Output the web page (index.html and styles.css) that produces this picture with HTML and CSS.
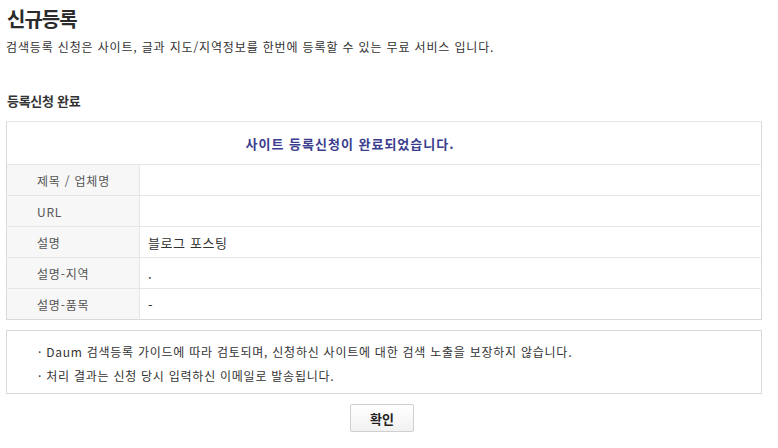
FILE: index.html
```html
<!DOCTYPE html>
<html lang="ko">
  <head>
    <meta charset="UTF-8" />
    <meta name="viewport" content="width=device-width, initial-scale=1.0" />
    <title>신규등록</title>
    <link rel="stylesheet" href="styles.css">
  </head>
  <body>
    <div class="wrap">
      <h1 class="title">신규등록</h1>
      <p class="desc">검색등록 신청은 사이트, 글과 지도/지역정보를 한번에 등록할 수 있는 무료 서비스 입니다.</p>

      <h2 class="sub">등록신청 완료</h2>
      <table class="result">
        <tr>
          <th colspan="2" class="done">사이트 등록신청이 완료되었습니다.</th>
        </tr>
        <tr>
          <td class="label">제목 / 업체명</td>
          <td class="value"></td>
        </tr>
        <tr>
          <td class="label">URL</td>
          <td class="value"></td>
        </tr>
        <tr>
          <td class="label">설명</td>
          <td class="value">블로그 포스팅</td>
        </tr>
        <tr>
          <td class="label">설명-지역</td>
          <td class="value">.</td>
        </tr>
        <tr>
          <td class="label">설명-품목</td>
          <td class="value">-</td>
        </tr>
      </table>

      <div class="notice">
        <p>· Daum 검색등록 가이드에 따라 검토되며, 신청하신 사이트에 대한 검색 노출을 보장하지 않습니다.</p>
        <p>· 처리 결과는 신청 당시 입력하신 이메일로 발송됩니다.</p>
      </div>

      <div class="actions">
        <button type="button" class="btn">확인</button>
      </div>
    </div>
  </body>
</html>
```

FILE: styles.css
```css
body {
  margin: 0;
  padding: 0;
  background-color: #fff;
  color: #333;
  font-family: "Noto Sans CJK KR", "Liberation Sans", sans-serif;
  font-size: 12px;
}
.wrap {
  width: 756px;
  margin-left: 6px;
}
.title {
  margin: 5px 0 0 1px;
  font-size: 20px;
  line-height: 28px;
  color: #2b2b2b;
  font-weight: bold;
  letter-spacing: -1px;
}
.desc {
  margin: 5px 0 0 0;
  line-height: 18px;
  color: #333;
  letter-spacing: 0.85px;
}
.sub {
  margin: 36px 0 0 1px;
  font-size: 13px;
  line-height: 18px;
  font-weight: bold;
  color: #333;
  letter-spacing: -0.3px;
}
.result {
  width: 100%;
  margin-top: 11px;
  border-collapse: collapse;
  border: 1px solid #d9d9d9;
}
.result td,
.result th {
  border-top: 1px solid #e6e6e6;
  padding: 0;
}
.result th.done {
  height: 42px;
  padding-right: 68px;
  text-align: center;
  font-size: 13px;
  font-weight: bold;
  color: #3b3e8e;
  letter-spacing: 1px;
}
.result td.label {
  width: 102px;
  height: 30px;
  padding-left: 30px;
  background-color: #f7f7f7;
  border-right: 1px solid #e6e6e6;
  color: #555;
  letter-spacing: 0.8px;
}
.result td.value {
  padding-left: 8px;
  font-size: 13px;
  color: #333;
  letter-spacing: 0.6px;
}
.notice {
  margin-top: 10px;
  border: 1px solid #d9d9d9;
  padding: 9px 0 5px 31px;
}
.notice p {
  margin: 0;
  line-height: 24px;
  color: #333;
  letter-spacing: 0.75px;
}
.actions {
  margin-top: 10px;
  text-align: center;
}
.btn {
  width: 64px;
  height: 28px;
  margin-left: -4px;
  border: 1px solid #cfcfcf;
  border-radius: 2px;
  background: linear-gradient(#ffffff, #f1f1f1);
  font-family: "Noto Sans CJK KR", sans-serif;
  font-size: 13px;
  font-weight: bold;
  color: #222;
  cursor: pointer;
}
```
